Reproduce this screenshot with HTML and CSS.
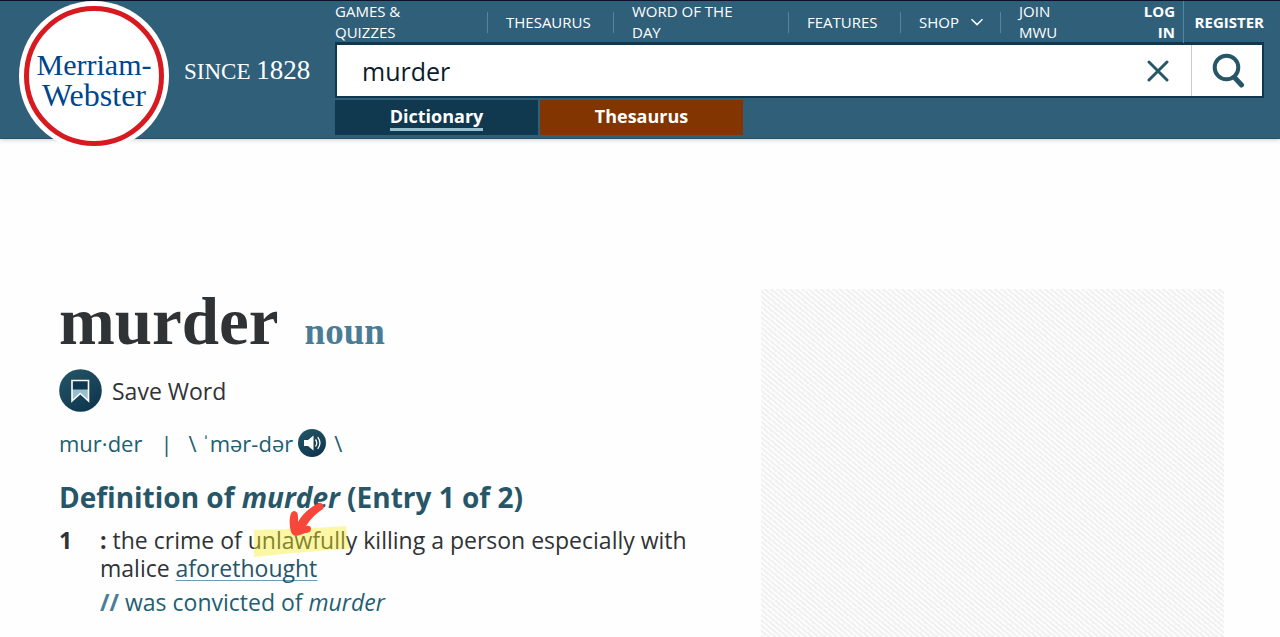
FILE: index.html
```html
<!DOCTYPE html>
<html lang="en">
<head>
<meta charset="utf-8">
<meta name="viewport" content="width=device-width, initial-scale=1">
<title>Murder | Definition of Murder by Merriam-Webster</title>
<link rel="stylesheet" href="styles.css">
</head>
<body>
<header class="header">
  <div class="brand">
    <a class="logo" href="#"><span class="logo-ring"><span>Merriam-</span><span class="logo-second">Webster</span></span></a>
    <span class="since">SINCE <span class="year">1828</span></span>
  </div>
  <div class="header-main">
    <nav class="nav">
      <a href="#">GAMES &amp;<br>QUIZZES</a>
      <a class="ruled" href="#">THESAURUS</a>
      <a class="ruled" href="#">WORD OF THE<br>DAY</a>
      <a class="ruled" href="#">FEATURES</a>
      <a class="ruled" href="#">SHOP <svg class="chevron" viewBox="0 0 14 8"><path d="M1.500 1.200 7 6.600l5.500-5.400"/></svg></a>
      <a class="ruled" href="#">JOIN<br>MWU</a>
      <a class="login" href="#">LOG<br>IN</a>
      <a class="register" href="#">REGISTER</a>
    </nav>
    <form class="search">
      <input class="search-input" type="text" value="murder" aria-label="Search the dictionary">
      <button class="clear" type="button" aria-label="Clear"><svg width="22" height="22" viewBox="0 0 22 22"><path d="M2 2l18 18M20 2 2 20"/></svg></button>
      <button class="submit" type="button" aria-label="Search"><svg width="34" height="36" viewBox="0 0 34 36"><circle cx="16.500" cy="14.500" r="11.800"/><path class="handle" d="M25 25 31.500 32"/></svg></button>
    </form>
    <div class="tabs">
      <button class="tab tab-dictionary" type="button"><span>Dictionary</span></button>
      <button class="tab tab-thesaurus" type="button"><span>Thesaurus</span></button>
    </div>
  </div>
</header>
<main class="main">
  <article class="entry">
    <div class="headline"><h1>murder</h1><a class="pos" href="#">noun</a></div>
    <button class="save" type="button">
      <svg width="43" height="43" viewBox="0 0 43 43">
        <defs><linearGradient id="disc" x1="0" y1="0" x2=".6" y2="1"><stop offset="0" stop-color="#265667"/><stop offset="1" stop-color="#0f3850"/></linearGradient></defs>
        <circle cx="21.500" cy="21.500" r="21.300" fill="url(#disc)"/>
        <path d="M13 11h17v10H13z" fill="#0f3850"/>
        <path d="M13 20.500h17V32l-8.500-7.500L13 32z" fill="#97bece"/>
        <path d="M13 11.500h16.500v20.500l-8.200-7.500L13 32z" fill="none" stroke="#fff" stroke-width="1.600"/>
      </svg>
      Save Word
    </button>
    <div class="pron">
      <span>mur·der</span><span class="bar">|</span><span>\ ˈmər-dər</span>
      <button class="audio" type="button" aria-label="Play pronunciation"><svg width="28" height="28" viewBox="0 0 28 28"><circle cx="14" cy="14" r="14" fill="url(#disc)"/><path d="M6 11h4l5.500-4.500v15L10 17H6z" fill="#fff"/><path d="M17.500 10.500q2.500 3.500 0 7M19.700 8.200q4.500 5.800 0 11.600" fill="none" stroke="#fff" stroke-width="1.300"/></svg></button>
      <span>\</span>
    </div>
    <h2>Definition of <em>murder</em> (Entry 1 of 2)</h2>
    <div class="sense">
      <b>1</b>
      <div>
        <p class="meaning"><b>:</b> the crime of <span class="marked">unlawfully<svg class="marker" width="100" height="60" viewBox="0 0 100 60"><path d="M6 30Q50 29 98 26l3 23Q60 51 6 57z" fill="#f8ee28" opacity=".42"/><path d="M73 3q4 2 2 6-10 6-17 17 5-1 5 3 0 4-6 4-4 2-9 3-3 0-5-4-2-7-1-15 1-6 4-6 4 0 4 6v5Q56 11 69 4q2-2 4-1z" fill="#f9463a"/></svg></span> killing a person especially with malice <a class="xref" href="#">aforethought</a></p>
        <p class="example"><b>//</b> was convicted of <em>murder</em></p>
      </div>
    </div>
  </article>
  <aside class="ad" aria-label="Advertisement"></aside>
</main>
</body>
</html>
```

FILE: styles.css
```css
* { box-sizing: border-box; }
body {
  margin: 0;
  min-height: 100vh;
  display: flex;
  flex-direction: column;
  background: #fefefe;
  color: #303336;
  font-family: "Open Sans", sans-serif;
}
a { color: inherit; text-decoration: none; }
button { padding: 0; border: 0; background: none; color: inherit; font: inherit; cursor: pointer; }
h1, h2, p { margin: 0; }
svg { display: block; }

.header {
  display: flex;
  padding: 0 16px 3px 19px;
  border-top: 1px solid #0b1226;
  border-bottom: 1px solid #275068;
  background: #305f7a;
  color: #fff;
  box-shadow: 0 1px 4px rgba(0, 0, 0, .2);
}
.brand {
  flex: 0 0 316px;
  height: 134px;
  display: flex;
  align-items: flex-start;
  gap: 15px;
}
.logo {
  width: 150px;
  height: 150px;
  padding: 5px;
  border-radius: 50%;
  background: #fff;
}
.logo-ring {
  height: 100%;
  display: flex;
  flex-direction: column;
  align-items: center;
  justify-content: center;
  padding-top: 8px;
  border: 5px solid #d71920;
  border-radius: 50%;
  color: #00468b;
  font: 30px/30px "Liberation Serif", serif;
}
.logo-second { font-size: 32px; }
.since { padding-top: 54px; font: 23px/30px "Liberation Serif", serif; }
.year { font-size: 27px; }
.header-main { flex: 1; min-width: 0; }

.nav {
  display: grid;
  grid-template-columns: 152fr 126fr 175fr 112fr 100fr 124fr 59fr 81fr;
  align-items: center;
  height: 41px;
  padding-bottom: 2px;
  font-size: 15px;
  line-height: 21px;
  white-space: nowrap;
}
.nav a { display: flex; align-items: center; }
.nav .ruled {
  padding-left: 19px;
  background: linear-gradient(#5187a3, #5187a3) left center / 1px 21px no-repeat;
}
.nav .login { justify-content: flex-end; padding-right: 8px; font-weight: 700; text-align: right; }
.nav .register { height: 42px; justify-content: flex-end; border-left: 1px solid #5187a3; font-weight: 700; }
.chevron { width: 14px; height: 8px; margin-left: 11px; fill: none; stroke: #fff; stroke-width: 1.5; }

.search { display: flex; height: 56px; border: 3px solid #0f3850; border-width: 3px 2px 2px; background: #fff; }
.search-input {
  flex: 1;
  min-width: 0;
  padding: 0 0 0 25px;
  border: 0;
  outline: 0;
  background: none;
  color: #0a1c2b;
  font: 25px "Open Sans", sans-serif;
}
.clear, .submit { display: flex; align-items: center; justify-content: center; }
.clear { width: 66px; }
.submit { width: 71px; border-left: 1px solid #c4cbd2; }
.search svg { fill: none; stroke: #265667; stroke-width: 3; stroke-linecap: round; }
.search .submit svg { stroke-width: 4; }
.search .handle { stroke-width: 5; }

.tabs { display: flex; gap: 2px; padding-top: 2px; }
.tab { flex: 0 1 203px; height: 35px; display: flex; align-items: center; justify-content: center; color: #fff; font-size: 18px; font-weight: 700; line-height: 24px; }
.tab span { border-bottom: 3px solid transparent; }
.tab-dictionary { background: #10384f; }
.tab-dictionary span { border-color: #97bece; }
.tab-thesaurus { background: #833500; }

.main { flex: 1; display: flex; gap: 40px; padding: 150px 56px 0 59px; }
.entry { flex: 1; min-width: 0; }
.headline { display: flex; align-items: baseline; gap: 26px; font-family: "Liberation Serif", serif; font-weight: 700; line-height: 64px; }
h1 { font-size: 67px; font-weight: 700; }
.pos { color: #4a7d95; font-size: 37px; }
.save { display: flex; align-items: center; gap: 10px; margin-top: 5px; font-size: 23px; }
.pron { display: flex; align-items: center; height: 32px; margin-top: 15px; color: #225f73; font-size: 22px; white-space: pre; }
.bar { margin: 0 16px 0 18px; }
.audio { margin: 0 8px 0 5px; }
h2 { margin-top: 19px; color: #265667; font-size: 28px; line-height: 38px; }
.sense { display: grid; grid-template-columns: 41px 1fr; margin-top: 10px; font-size: 23px; line-height: 28px; }
.marked { position: relative; }
.marker { position: absolute; left: 0; top: -24px; overflow: visible; }
.xref { color: #265667; text-decoration: underline 1px #6c9cae; text-underline-offset: 3px; text-decoration-skip-ink: none; }
.example { margin-top: 6px; color: #225f73; }
.example b { color: #4a7d95; }
.ad {
  flex: 0 0 463px;
  min-height: 348px;
  background: repeating-linear-gradient(40deg, #f1f1f1 0 2px, #fcfcfc 2px 4px);
}
```
